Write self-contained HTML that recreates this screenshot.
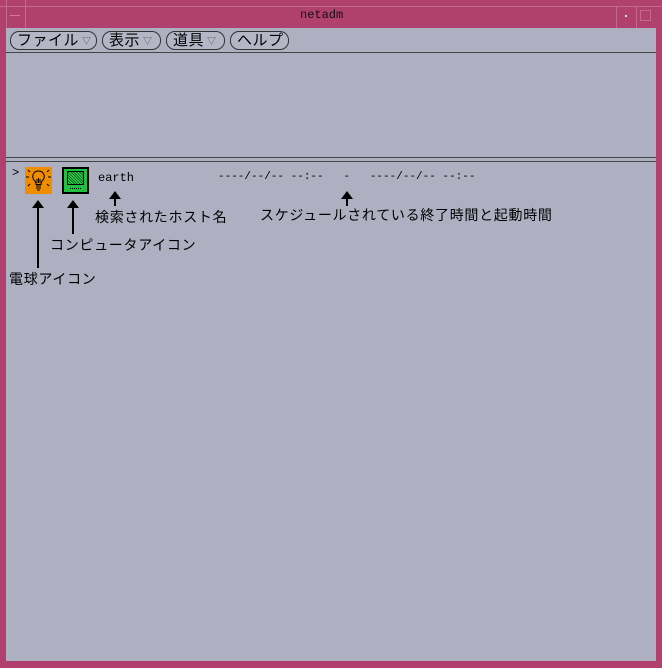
<!DOCTYPE html>
<html><head><meta charset="utf-8"><style>
*{margin:0;padding:0;box-sizing:border-box}
body{width:662px;height:668px;overflow:hidden;background:#b0406e;position:relative;font-family:"Liberation Sans","Noto Sans CJK JP",sans-serif;font-size:13px;color:#000}
.a{position:absolute}
.win{left:6px;top:28px;width:650px;height:633px;background:#aeb0c2}
.btn{position:absolute;top:31px;height:19px;border:1px solid #333;border-radius:9px;background:#b4b6c6;font-size:15px;line-height:17px;padding-left:6px;white-space:nowrap;letter-spacing:0.5px}
.tri{font-size:9px;color:#555;margin-left:3px;vertical-align:1px}
.mono{font-family:"Liberation Mono",monospace;font-size:12px}
.lbl{font-size:14px;letter-spacing:0.7px;white-space:nowrap}
.ln{position:absolute;background:#000;width:2px}
.ah{position:absolute;width:0;height:0;border-left:6px solid transparent;border-right:6px solid transparent;border-bottom:8px solid #000}
</style></head><body>
<div class="a" style="left:0;top:0;width:662px;height:28px;background:#b0406e"></div>
<div class="a" style="left:6px;top:0;width:1px;height:28px;background:#c46a90"></div>
<div class="a" style="left:25px;top:0;width:1px;height:28px;background:#c46a90"></div>
<div class="a" style="left:0;top:6px;width:662px;height:1px;background:#c46a90"></div>
<div class="a" style="left:10px;top:15px;width:10px;height:1px;background:#d07a9c"></div>
<div class="a" style="left:616px;top:6px;width:1px;height:22px;background:#c46a90"></div>
<div class="a" style="left:636px;top:6px;width:1px;height:22px;background:#c46a90"></div>
<div class="a" style="left:625px;top:15px;width:2px;height:2px;background:#ddd"></div>
<div class="a" style="left:640px;top:10px;width:11px;height:11px;border:1px solid #c46a90"></div>
<div class="a mono" style="left:300px;top:8px;color:#111;font-size:12px">netadm</div>
<div class="a win"></div>
<div class="btn" style="left:10px;width:87px">ファイル<span class="tri">▽</span></div>
<div class="btn" style="left:102px;width:59px">表示<span class="tri">▽</span></div>
<div class="btn" style="left:166px;width:59px">道具<span class="tri">▽</span></div>
<div class="btn" style="left:230px;width:59px">ヘルプ</div>
<div class="a" style="left:6px;top:52px;width:650px;height:106px;border-top:1px solid #444;border-bottom:1px solid #444"></div>
<div class="a" style="left:6px;top:161px;width:650px;height:1px;background:#444"></div>
<div class="a mono" style="left:12px;top:166px;font-size:12px">&gt;</div>
<div class="a" style="left:25px;top:167px;width:27px;height:27px;background:#f08c00">
<svg width="27" height="27" viewBox="0 0 27 27"><g stroke="#000" fill="none" stroke-width="1"><path d="M13.5 4a5.5 5.5 0 0 0-4 9.5c1 1 1.5 2.5 1.5 4h5c0-1.5.5-3 1.5-4a5.5 5.5 0 0 0-4-9.5z"/><path d="M11 19h5M11 21h5M12 23h3M12 12v4M13.5 11v5M15 12v4M1 10h3M23 10h3M3 3l2 2M24 3l-2 2M3 19l2-2M24 19l-2-2"/></g></svg></div>
<div class="a" style="left:62px;top:167px;width:27px;height:27px;background:#22c040;border:2px solid #000">
<div class="a" style="left:3px;top:2px;width:17px;height:14px;background:repeating-linear-gradient(45deg,#0a6a1a 0 1px,#3ad85a 1px 2px);border:1px solid #000"></div>
<div class="a" style="left:6px;top:19px;width:11px;height:2px;border-top:1px dotted #000"></div></div>
<div class="a mono" style="left:98px;top:171px;font-size:12px">earth</div>
<div class="a mono" style="left:218px;top:171px;font-size:11px">----/--/-- --:--&nbsp;&nbsp;&nbsp;-&nbsp;&nbsp;&nbsp;----/--/-- --:--</div>
<div class="ah" style="left:109px;top:191px"></div><div class="ln" style="left:114px;top:198px;height:8px"></div>
<div class="a lbl" style="left:95px;top:207px">検索されたホスト名</div>
<div class="ah" style="left:341px;top:191px"></div><div class="ln" style="left:346px;top:198px;height:8px"></div>
<div class="a lbl" style="left:260px;top:205px">スケジュールされている終了時間と起動時間</div>
<div class="ah" style="left:67px;top:200px"></div><div class="ln" style="left:72px;top:207px;height:27px"></div>
<div class="a lbl" style="left:50px;top:235px">コンピュータアイコン</div>
<div class="ah" style="left:32px;top:200px"></div><div class="ln" style="left:37px;top:207px;height:61px"></div>
<div class="a lbl" style="left:9px;top:269px">電球アイコン</div>
</body></html>
